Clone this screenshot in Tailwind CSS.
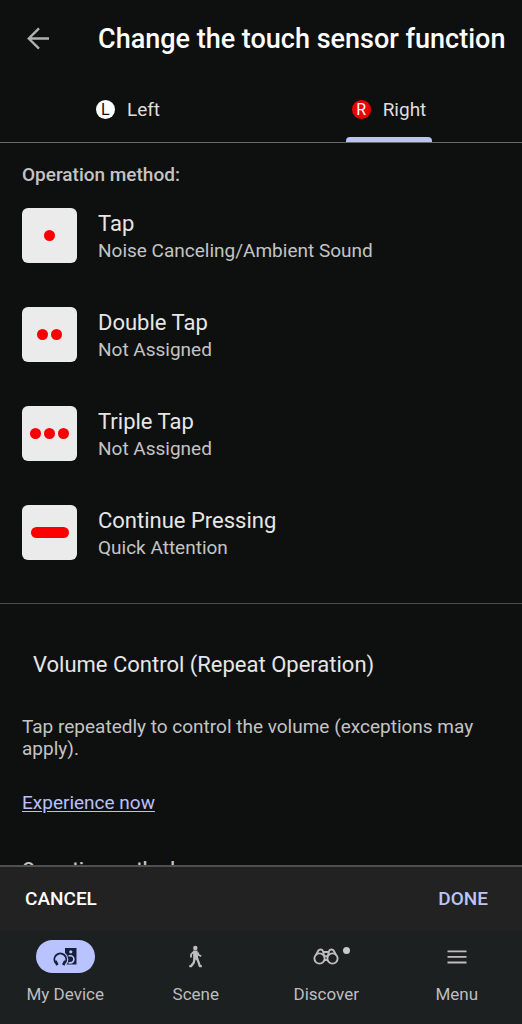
<!DOCTYPE html>
<html lang="en">
<head>
<meta charset="utf-8">
<meta name="viewport" content="width=device-width, initial-scale=1">
<title>Change the touch sensor function</title>
<script src="https://cdn.jsdelivr.net/npm/@tailwindcss/browser@4"></script>
</head>
<body class="flex h-screen flex-col bg-[#0e100f] font-['Roboto',sans-serif] text-[19px] leading-[22px] text-[#c4c4c4]">
  <header class="flex h-[77px] shrink-0 items-center pl-[22px] pr-4">
    <button type="button" aria-label="Back" class="flex size-8 items-center justify-center text-[#b0b0b0]">
      <svg class="size-8" viewBox="0 0 32 32" fill="none" stroke="currentColor" stroke-width="2.4"><path d="M27 15.500H7M17 5.300L6.800 15.500L17 25.700"/></svg>
    </button>
    <h1 class="ml-11 whitespace-nowrap text-[27px] leading-8 font-medium text-white">Change the touch sensor function</h1>
  </header>

  <div role="tablist" class="grid h-[66px] shrink-0 grid-cols-2 border-b border-[#6a6a6a] text-[#dedede]">
    <button type="button" role="tab" aria-selected="false" class="flex items-center justify-center pr-[5px]">
      <span class="flex h-full items-center gap-3">
        <span class="flex size-[19px] items-center justify-center rounded-full bg-white text-base text-[#0e100f]">L</span>
        <span>Left</span>
      </span>
    </button>
    <button type="button" role="tab" aria-selected="true" class="flex items-center justify-center pr-[5px]">
      <span class="relative flex h-full items-center gap-3 px-1.5">
        <span class="flex size-[19px] items-center justify-center rounded-full bg-[#ee0000] text-base text-white">R</span>
        <span>Right</span>
        <span class="absolute inset-x-0 bottom-0 h-[5px] rounded-t bg-[#bcc3fb]"></span>
      </span>
    </button>
  </div>

  <main class="min-h-0 flex-1 overflow-y-auto [scrollbar-width:none]">
    <section class="border-b border-[#4c4e4d] px-[22px] pt-[21px] pb-[43px]">
      <h2 class="font-medium">Operation method:</h2>
      <ul class="mt-[22px] flex flex-col gap-11">
        <li class="flex items-center gap-[21px]">
          <span class="flex size-[55px] items-center justify-center gap-[3px] rounded-md bg-[#ebebeb]"><i class="size-[11px] rounded-full bg-[#fb0000]"></i></span>
          <span class="flex flex-col"><span class="text-[22px] leading-[30px] text-[#e6e6e6]">Tap</span><span class="leading-6">Noise Canceling/Ambient Sound</span></span>
        </li>
        <li class="flex items-center gap-[21px]">
          <span class="flex size-[55px] items-center justify-center gap-[3px] rounded-md bg-[#ebebeb]"><i class="size-[11px] rounded-full bg-[#fb0000]"></i><i class="size-[11px] rounded-full bg-[#fb0000]"></i></span>
          <span class="flex flex-col"><span class="text-[22px] leading-[30px] text-[#e6e6e6]">Double Tap</span><span class="leading-6">Not Assigned</span></span>
        </li>
        <li class="flex items-center gap-[21px]">
          <span class="flex size-[55px] items-center justify-center gap-[3px] rounded-md bg-[#ebebeb]"><i class="size-[11px] rounded-full bg-[#fb0000]"></i><i class="size-[11px] rounded-full bg-[#fb0000]"></i><i class="size-[11px] rounded-full bg-[#fb0000]"></i></span>
          <span class="flex flex-col"><span class="text-[22px] leading-[30px] text-[#e6e6e6]">Triple Tap</span><span class="leading-6">Not Assigned</span></span>
        </li>
        <li class="flex items-center gap-[21px]">
          <span class="flex size-[55px] items-center justify-center rounded-md bg-[#ebebeb]"><i class="h-[11px] w-[38px] rounded-full bg-[#fb0000]"></i></span>
          <span class="flex flex-col"><span class="text-[22px] leading-[30px] text-[#e6e6e6]">Continue Pressing</span><span class="leading-6">Quick Attention</span></span>
        </li>
      </ul>
    </section>
    <section class="px-[22px] pt-[46px] pb-6">
      <h2 class="pl-[11px] text-[22px] leading-[30px] text-[#e6e6e6]">Volume Control (Repeat Operation)</h2>
      <p class="mt-9">Tap repeatedly to control the volume (exceptions may apply).</p>
      <a href="#" class="mt-8 inline-block text-[#b9c0fa] underline underline-offset-2">Experience now</a>
      <h3 class="mt-11 font-medium">Operation method:</h3>
    </section>
  </main>

  <div class="flex h-[66px] shrink-0 items-center justify-between border-t-2 border-[#4f4f4f] bg-[#222222] px-[25px] font-medium">
    <button type="button" class="text-white">CANCEL</button>
    <button type="button" class="mr-[9px] text-[#bcc3fb]">DONE</button>
  </div>

  <nav class="grid h-[93px] shrink-0 grid-cols-4 items-start bg-[#1c2021] pt-[9px] text-[17px] leading-5 text-[#bebebe]">
    <a href="#" aria-current="page" class="flex flex-col items-center gap-[11px]">
      <span class="flex h-[33px] w-[59px] items-center justify-center rounded-full bg-[#b9c3ff] text-[#17203a]">
        <svg class="h-5 w-6" viewBox="0 0 24 20" fill="none">
          <path d="M12 1h11.500v16.500H12z" fill="currentColor"/>
          <circle cx="17.800" cy="4.800" r="1.600" fill="#b9c3ff"/>
          <path d="M15.500 8.700h1.800a3.600 3.600 0 0 1 0 7.200h-1.800" stroke="#b9c3ff" stroke-width="1.600"/>
          <circle cx="7.300" cy="12.500" r="8" fill="#b9c3ff"/>
          <path d="M2.600 16a5.900 5.900 0 1 1 9.400 0" stroke="currentColor" stroke-width="1.900"/>
          <path d="M1 13.800l2.600-.4 2 3.800-2.400 1.500zM13.600 13.800l-2.600-.4-2 3.800 2.400 1.500z" fill="currentColor"/>
        </svg>
      </span>
      <span>My Device</span>
    </a>
    <a href="#" class="flex flex-col items-center gap-[11px]">
      <span class="flex h-[33px] items-center justify-center">
        <svg class="h-6 w-4" viewBox="0 0 16 24" fill="none" stroke="currentColor" stroke-linejoin="round">
          <circle cx="7.300" cy="3" r="2.200" fill="currentColor" stroke="none"/>
          <path d="M5 5.500h4.500l.8 9h-5z" fill="currentColor" stroke="none"/>
          <path d="M5.300 7L3 9.500v3M9.500 7.500l1.200 2.500 2.500 1.300" stroke-width="1.800"/>
          <path d="M6.600 13.500l-.8 4-2.800 3.700H1.300M9 13.500l1.500 3.500 1.300 4.200h2" stroke-width="2.300"/>
        </svg>
      </span>
      <span>Scene</span>
    </a>
    <a href="#" class="flex flex-col items-center gap-[11px]">
      <span class="relative flex h-[33px] items-center justify-center">
        <svg class="h-5 w-[26px]" viewBox="0 0 26 20" fill="none" stroke="currentColor" stroke-width="1.900">
          <circle cx="6.500" cy="11.500" r="5.100"/><circle cx="19.500" cy="11.500" r="5.100"/>
          <path d="M3 8l2.200-4.200c1-1.800 4.300-1.800 4.800.5l1 4M23 8l-2.200-4.200c-1-1.800-4.300-1.800-4.800.5l-1 4M10.300 5h5.400M11 9.200h4M11.500 13h3"/>
        </svg>
        <span class="absolute -right-[11px] top-[7px] size-[7px] rounded-full bg-[#c9c9c9]"></span>
      </span>
      <span>Discover</span>
    </a>
    <a href="#" class="flex flex-col items-center gap-[11px]">
      <span class="flex h-[33px] items-center justify-center">
        <svg class="h-5 w-5" viewBox="0 0 20 20" stroke="currentColor" stroke-width="1.800"><path d="M.5 4.300h19M.5 9.900h19M.5 15.500h19"/></svg>
      </span>
      <span>Menu</span>
    </a>
  </nav>
</body>
</html>
